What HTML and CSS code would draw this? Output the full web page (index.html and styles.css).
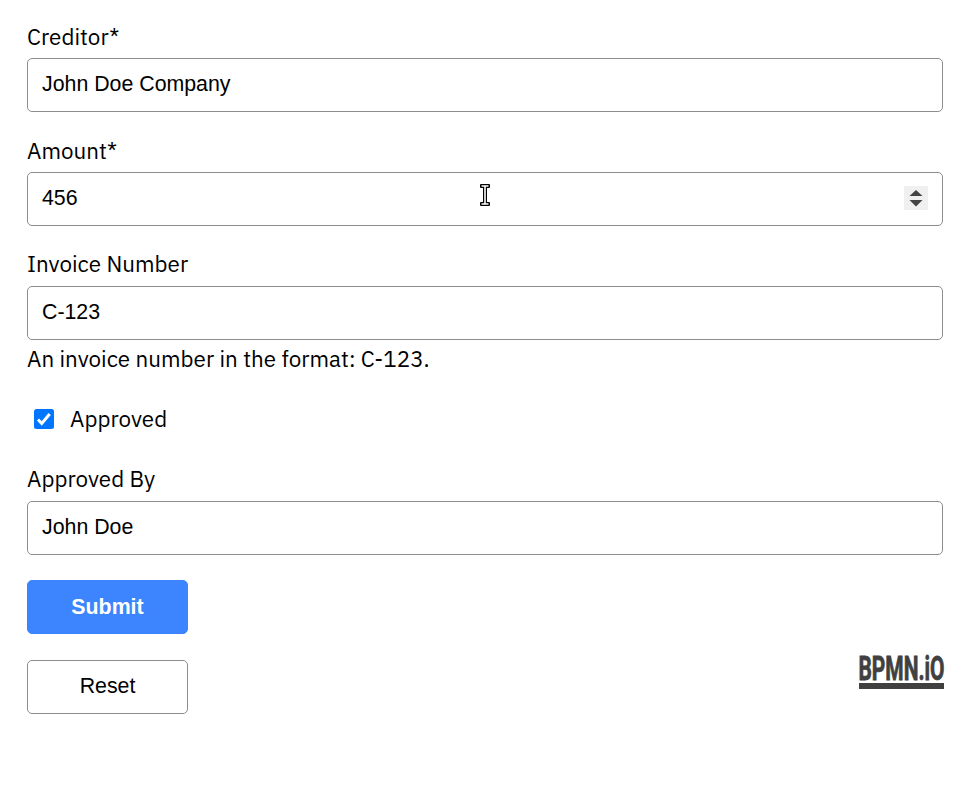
FILE: index.html
```
<!DOCTYPE html>
<html lang="en">
<head>
<meta charset="utf-8">
<title>Invoice form</title>
<link rel="stylesheet" href="styles.css">
</head>
<body>
<form class="form">
  <div class="field">
    <label class="label" for="creditor">Creditor*</label>
    <input class="input" id="creditor" type="text" value="John Doe Company">
  </div>
  <div class="field">
    <label class="label" for="amount">Amount*</label>
    <div class="number">
      <input class="input" id="amount" type="text" value="456">
      <svg class="spinner" viewBox="0 0 24 24"><path fill="#f0f0f0" d="M0 0h24v24H0z"/><path fill="#444" d="M12 4l6.500 6h-13zM12 20.500L5.500 14h13z"/></svg>
      <svg class="caret" viewBox="0 0 12 24"><path d="M2 1h8q1 0 1 1v2q0 1-1 1H8v14h2q1 0 1 1v2q0 1-1 1H2q-1 0-1-1v-2q0-1 1-1h2V5H2Q1 5 1 4V2q0-1 1-1z" fill="#000"/><path d="M2.500 3h7M2.500 21h7M6 3v18" stroke="#fff" stroke-width="1.600"/></svg>
    </div>
  </div>
  <div class="field">
    <label class="label raised" for="invoice">Invoice Number</label>
    <input class="input" id="invoice" type="text" value="C-123">
    <div class="description">An invoice number in the format: C-123.</div>
  </div>
  <label class="check">
    <svg class="box" viewBox="0 0 20 20"><rect width="20" height="20" rx="2.500" fill="#0075ff"/><path d="M4 10.500l3.700 4L15.700 5" fill="none" stroke="#fff" stroke-width="3"/></svg>
    <span>Approved</span>
  </label>
  <div class="field">
    <label class="label raised" for="by">Approved By</label>
    <input class="input" id="by" type="text" value="John Doe">
  </div>
  <div class="footer">
    <div class="actions">
      <button class="button primary" type="button">Submit</button>
      <button class="button" type="button">Reset</button>
    </div>
    <svg class="logo" viewBox="0 -15 92 55"><text class="logo-text" x="-.500" y="25" textLength="86" lengthAdjust="spacingAndGlyphs">BPMN.iO</text><path d="M0 28h85v6H0z" fill="#404040"/></svg>
  </div>
</form>
</body>
</html>
```
FILE: styles.css
```
* { box-sizing: border-box; }
body { margin: 0; background: #fff; color: #000; }
.form { padding: 21px 27px 0; font: 22.4px/32px "IBM Plex Sans", Roboto, sans-serif; letter-spacing: .03px; }
.field { margin-bottom: 23px; }
.label { display: block; height: 37px; }
.raised { line-height: 30px; }
.input {
  display: block; width: 100%; height: 54px; margin: 0;
  padding: 0 14px 1px; border: 1px solid #8d8d8d; border-radius: 5px;
  background: #fff; color: #000; outline: 0;
  font: 21.33px "Liberation Sans", Arial, sans-serif;
}
.number { position: relative; }
.spinner { position: absolute; right: 15px; top: 14px; width: 24px; height: 24px; }
.caret { position: absolute; left: 452px; top: 11px; width: 12px; height: 24px; }
.description { height: 38px; padding-top: 3px; }
.check { display: flex; align-items: center; height: 35px; margin-bottom: 28px; padding-left: 7px; }
.box { width: 20px; height: 20px; margin-right: 16px; }
.footer { display: flex; justify-content: space-between; padding-top: 2px; }
.actions { display: flex; flex-direction: column; gap: 26px; }
.button {
  width: 161px; height: 54px; padding: 0 0 1px;
  border: 1px solid #8d8d8d; border-radius: 5px; background: #fff; color: #000;
  font: 21.33px "Liberation Sans", Arial, sans-serif;
}
.primary { padding: 1px 0 0; background: #3c85ff; border-color: #3c85ff; color: #fff; font-weight: 700; }
.logo { width: 92px; height: 55px; margin: 60px -8px 0 0; overflow: visible; }
.logo-text { font: 700 33.5px Roboto, sans-serif; letter-spacing: 0; fill: #404040; stroke: #404040; stroke-width: .8; }
```
